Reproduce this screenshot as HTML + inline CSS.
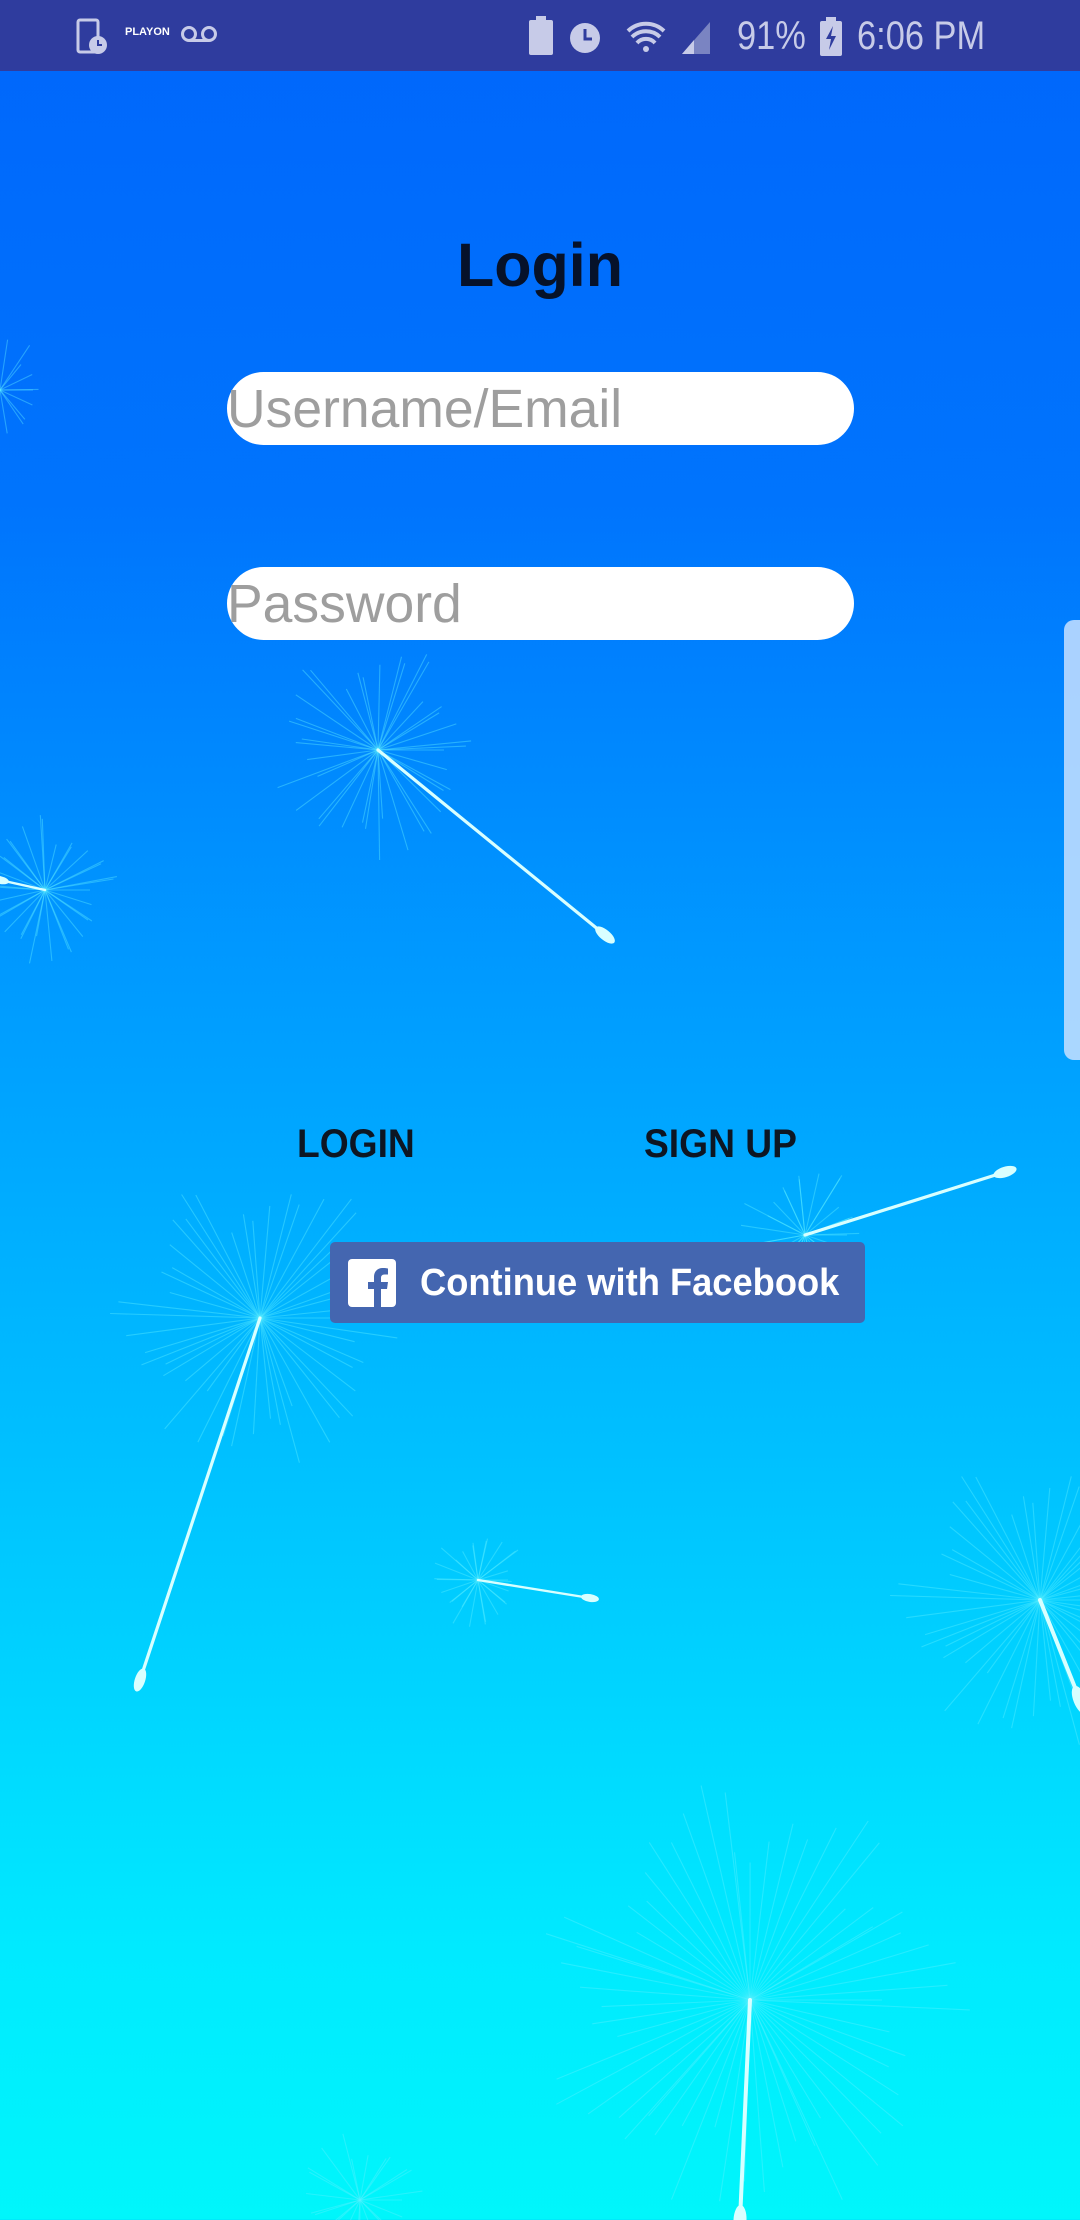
<!DOCTYPE html>
<html><head><meta charset="utf-8"><style>
html,body{margin:0;padding:0}
body{width:1080px;height:2220px;position:relative;overflow:hidden;font-family:"Liberation Sans",sans-serif;
background:linear-gradient(180deg,#0066fb 0px,#0074fd 500px,#009cff 1000px,#00c4ff 1500px,#00eaff 1950px,#00f6fb 2220px)}
#sb{position:absolute;left:0;top:0;width:1080px;height:71px;background:#2f3c9e;color:#c7cbe8}
.abs{position:absolute}
.field{position:absolute;left:227px;width:627px;height:73px;background:#fff;border-radius:37px}
.ph{position:absolute;left:0;top:4px;font-size:54px;color:#9e9e9e;line-height:66px;transform:scaleX(0.99);transform-origin:left;white-space:nowrap}
.btn{position:absolute;font-size:40px;font-weight:bold;color:#0d1623;transform:scaleX(0.93);transform-origin:left}
</style></head><body>
<svg id="bg" class="abs" style="left:0;top:0" width="1080" height="2220"></svg>
<div id="sb">
 <svg class="abs" style="left:75px;top:18px" width="40" height="38" viewBox="0 0 40 38"><rect x="3" y="2" width="20" height="32" rx="2" fill="none" stroke="#c7cbe8" stroke-width="3"/><circle cx="23" cy="27" r="9" fill="#c7cbe8"/><path d="M23 22v5h4" stroke="#2f3c9e" stroke-width="2" fill="none"/></svg>
 <div class="abs" style="left:125px;top:26px;font-size:11px;font-weight:bold;color:#fff">PLAYON</div>
 <svg class="abs" style="left:180px;top:24px" width="40" height="20"><circle cx="9" cy="10" r="6.5" fill="none" stroke="#c7cbe8" stroke-width="3"/><circle cx="29" cy="10" r="6.5" fill="none" stroke="#c7cbe8" stroke-width="3"/><path d="M9 16.5h20" stroke="#c7cbe8" stroke-width="3"/></svg>
 <svg class="abs" style="left:528px;top:16px" width="200" height="42"><rect x="1" y="4" width="24" height="35" rx="2" fill="#c7cbe8"/><rect x="8" y="0" width="10" height="5" fill="#c7cbe8"/>
 <circle cx="57" cy="22" r="15" fill="#c7cbe8"/><path d="M57 13v10h7" stroke="#2f3c9e" stroke-width="3" fill="none"/>
 <path d="M100 15 a26 26 0 0 1 36 0 M104 21 a20 20 0 0 1 28 0 M109 27 a12 12 0 0 1 18 0" stroke="#c7cbe8" stroke-width="4" fill="none"/><circle cx="118" cy="33" r="3" fill="#c7cbe8"/>
 <path d="M154 38 L182 6 L182 38 Z" fill="#7a84c2"/><path d="M154 38 L166 24 L166 38Z" fill="#c7cbe8"/></svg>
 <div class="abs" style="left:737px;top:8px;font-size:40px;line-height:56px;transform:scaleX(0.86);transform-origin:left">91%</div>
 <svg class="abs" style="left:819px;top:17px" width="24" height="40"><rect x="1" y="4" width="22" height="35" rx="2" fill="#c7cbe8"/><rect x="7" y="0" width="10" height="5" fill="#c7cbe8"/><path d="M14 9l-7 13h5l-2 11 7-14h-5z" fill="#2f3c9e"/></svg>
 <div class="abs" style="left:857px;top:8px;font-size:40px;line-height:56px;transform:scaleX(0.86);transform-origin:left">6:06 PM</div>
</div>
<div class="abs" style="left:0;width:1080px;top:230px;text-align:center;font-size:61px;font-weight:bold;color:#06122a">Login</div>
<div class="field" style="top:372px"><div class="ph">Username/Email</div></div>
<div class="field" style="top:567px"><div class="ph">Password</div></div>
<div class="abs" style="left:1064px;top:620px;width:20px;height:440px;border-radius:10px 0 0 10px;background:rgba(200,225,255,0.85)"></div>
<div class="btn" style="left:297px;top:1122px">LOGIN</div>
<div class="btn" style="left:644px;top:1122px">SIGN UP</div>
<div class="abs" style="left:330px;top:1242px;width:535px;height:81px;background:#4466b0;border-radius:5px">
 <svg class="abs" style="left:18px;top:17px" width="48" height="48" viewBox="0 0 48 48"><rect width="48" height="48" rx="4" fill="#fff"/><path d="M33 48V30h6l1-7h-7v-4c0-2 1-3.5 3.5-3.5H40V9.5C39 9.3 37 9 35 9c-5 0-9 3-9 9v5h-6v7h6v18z" fill="#4466b0"/></svg>
 <div class="abs" style="left:90px;top:18px;font-size:38px;font-weight:bold;color:#fff;line-height:46px;transform:scaleX(0.955);transform-origin:left;white-space:nowrap">Continue with Facebook</div>
</div>
<script>
var s=document.getElementById('bg'),h='';
function dl(cx,cy,r,n,sx,sy,sw){
 for(var i=0;i<n;i++){var a=i/n*6.283+((i*37)%11)*0.03,rr=r*(0.6+((i*53)%17)/40);
  h+='<line x1="'+cx+'" y1="'+cy+'" x2="'+(cx+Math.cos(a)*rr).toFixed(1)+'" y2="'+(cy+Math.sin(a)*rr).toFixed(1)+'" stroke="#5ff0ff" stroke-opacity="0.4" stroke-width="1.1"/>';}
 if(sx!==undefined){h+='<line x1="'+cx+'" y1="'+cy+'" x2="'+sx+'" y2="'+sy+'" stroke="#d8ffff" stroke-width="'+(sw*0.8)+'" stroke-linecap="round"/>';
  h+='<ellipse cx="'+sx+'" cy="'+sy+'" rx="'+(sw*3)+'" ry="'+(sw*1.3)+'" fill="#d8ffff" transform="rotate('+(Math.atan2(sy-cy,sx-cx)*57.3)+' '+sx+' '+sy+')"/>';}
}
dl(378,750,110,40,605,935,4);
dl(45,890,75,34,0,880,3);
dl(0,390,55,20);
dl(260,1318,150,50,140,1680,4);
dl(805,1235,70,30,1005,1172,4);
dl(478,1580,50,28,590,1598,3);
dl(1040,1600,150,50,1080,1700,5);
dl(750,2000,220,60,740,2220,5);
dl(360,2200,70,24);
s.innerHTML=h;
</script>
</body></html>
